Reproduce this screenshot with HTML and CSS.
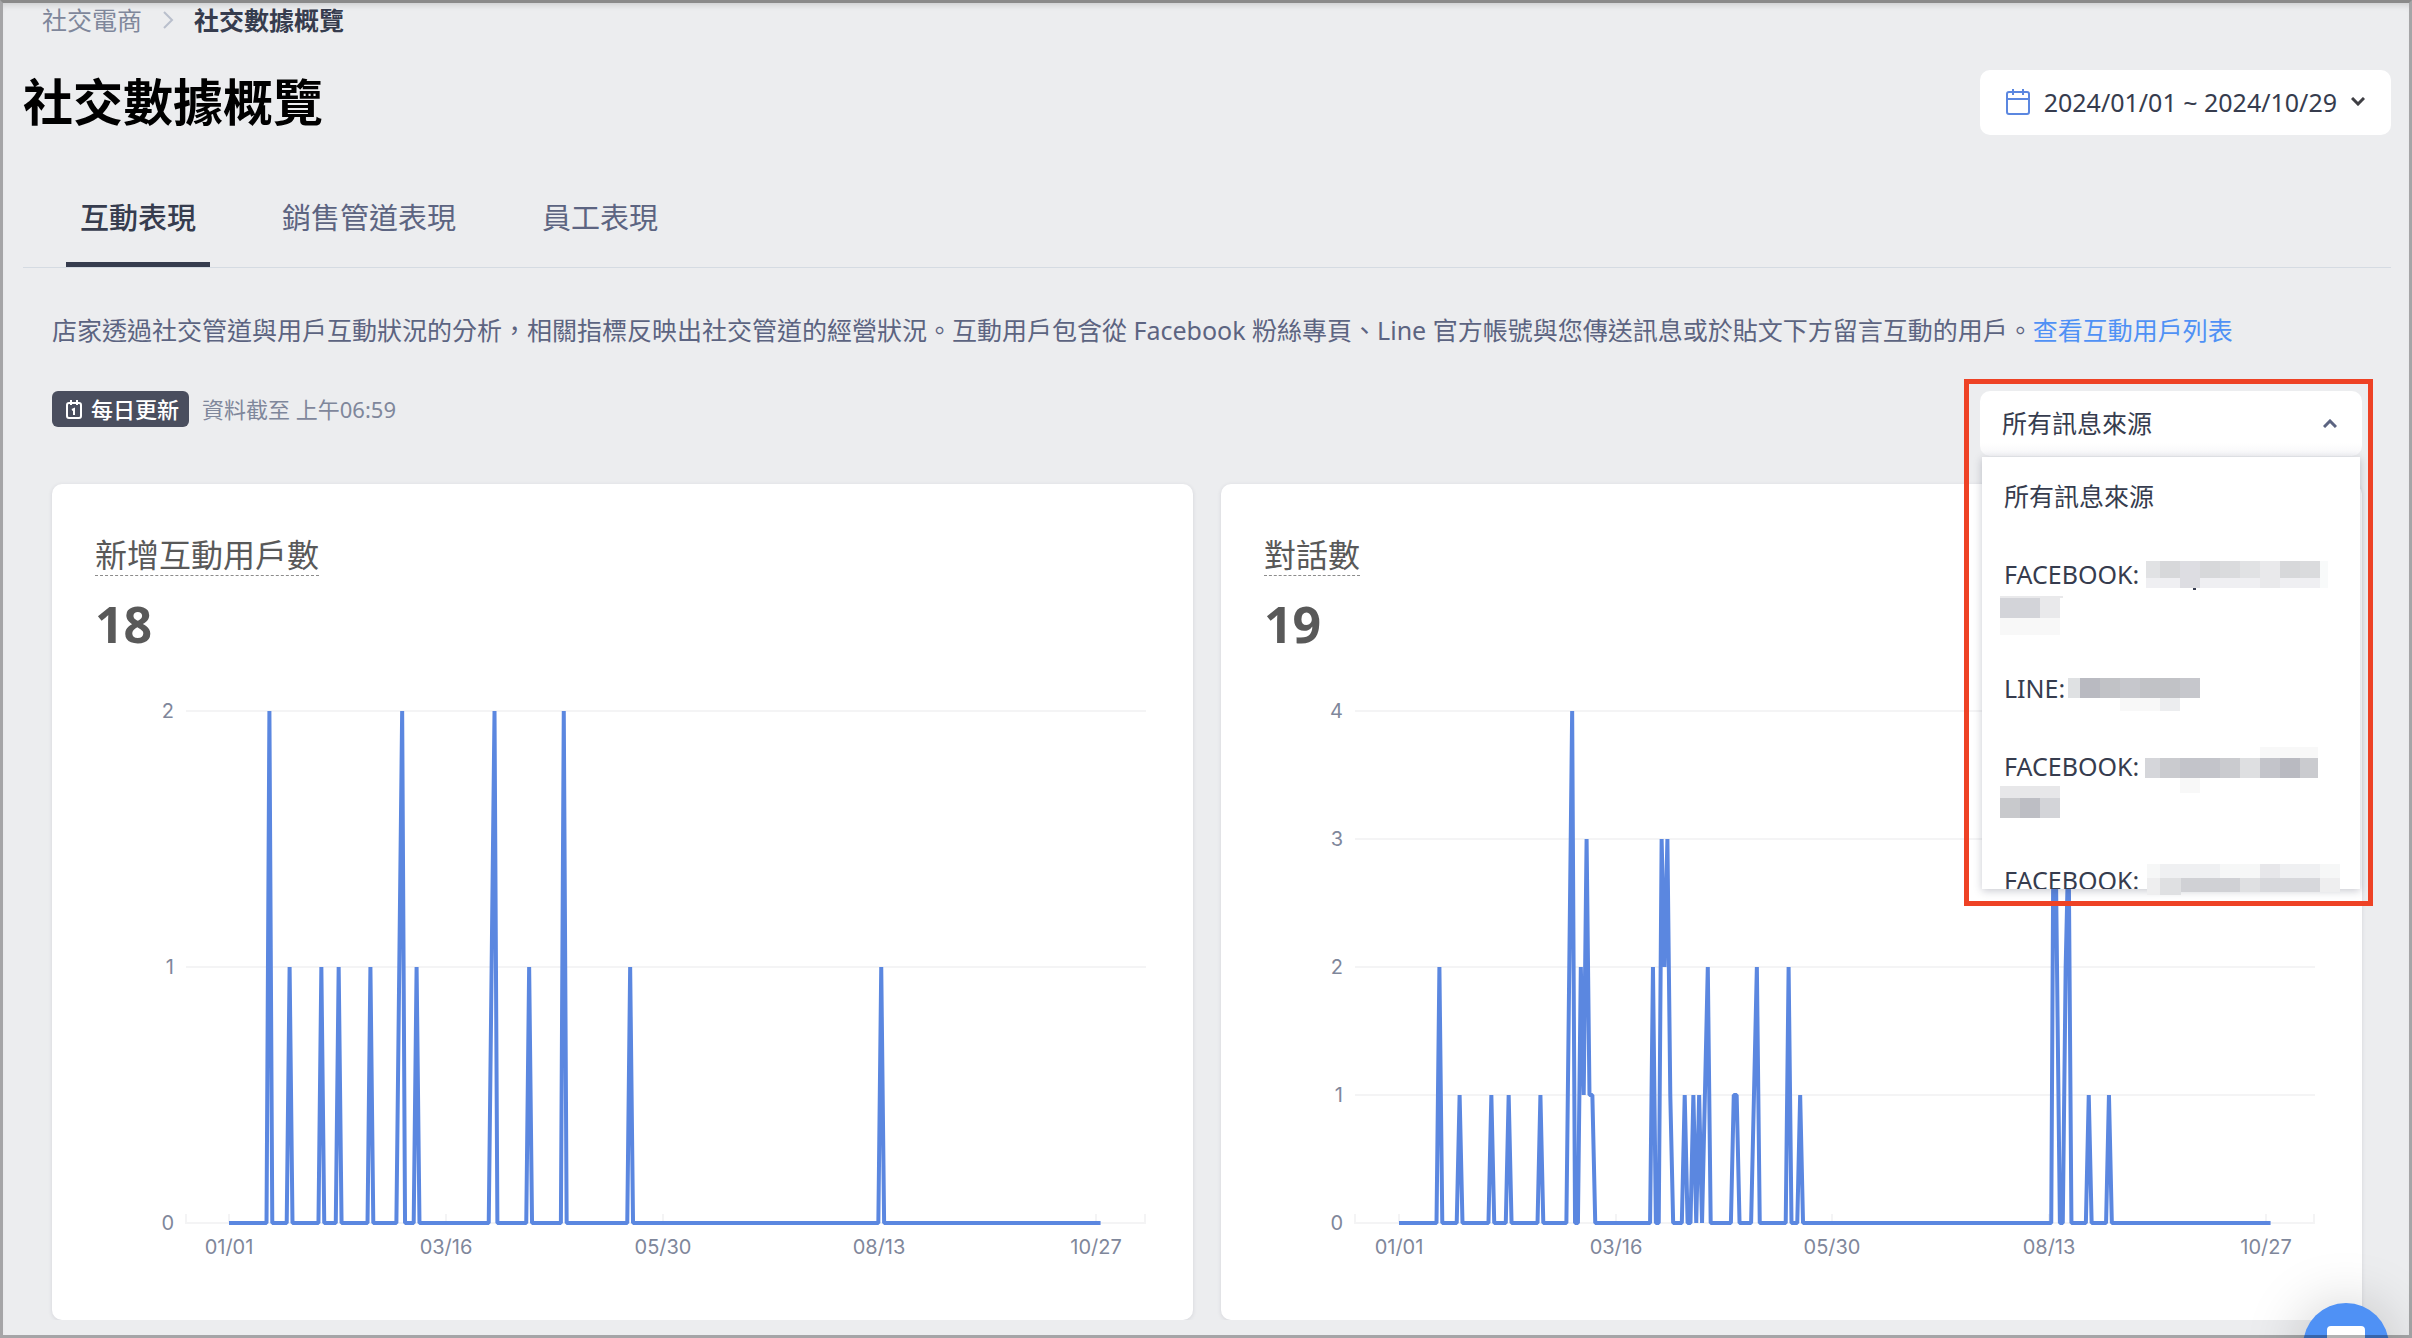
FILE: index.html
```html
<!DOCTYPE html>
<html lang="zh-Hant">
<head>
<meta charset="utf-8">
<meta name="viewport" content="width=device-width, initial-scale=1">
<title>社交數據概覽</title>
<link rel="stylesheet" href="styles.css">
</head>
<body>
<main class="page">
  <nav class="crumbs" aria-label="導覽">
    <a class="crumb-link" href="#">社交電商</a>
    <svg class="crumb-arrow" viewBox="0 0 12 20" aria-hidden="true"><path d="M2 2l8 8-8 8"/></svg>
    <span class="crumb-current">社交數據概覽</span>
  </nav>

  <header class="page-head">
    <h1 class="page-title">社交數據概覽</h1>
    <button class="date-picker" type="button">
      <svg class="date-icon" viewBox="0 0 24 26" aria-hidden="true"><rect x="1" y="3" width="22" height="22" rx="2"/><path d="M1 10h22M7 0v6M17 0v6"/></svg>
      <span>2024/01/01 ~ 2024/10/29</span>
      <svg class="date-caret" viewBox="0 0 14 9" aria-hidden="true"><path d="M1 1l6 6 6-6"/></svg>
    </button>
  </header>

  <div class="tabs" role="tablist">
    <button class="tab tab-active" type="button" role="tab" aria-selected="true">互動表現</button>
    <button class="tab" type="button" role="tab" aria-selected="false">銷售管道表現</button>
    <button class="tab" type="button" role="tab" aria-selected="false">員工表現</button>
  </div>

  <section class="content">
    <p class="intro">店家透過社交管道與用戶互動狀況的分析，相關指標反映出社交管道的經營狀況。互動用戶包含從 Facebook 粉絲專頁、Line 官方帳號與您傳送訊息或於貼文下方留言互動的用戶。<a class="intro-link" href="#">查看互動用戶列表</a></p>

    <div class="toolbar">
      <div class="update">
        <span class="badge">
          <svg class="badge-icon" viewBox="0 0 16 19" aria-hidden="true"><rect x="1" y="3" width="14" height="15" rx="2"/><path d="M5 0v5M11 0v5M6 10l2-1v6"/></svg>
          每日更新
        </span>
        <span class="update-time">資料截至 上午06:59</span>
      </div>

      <div class="source">
        <select class="source-select" aria-label="訊息來源">
          <option>所有訊息來源</option>
        </select>
        <svg class="source-caret" viewBox="0 0 14 9" aria-hidden="true"><path d="M1 8l6-6 6 6"/></svg>
        <ul class="source-menu" role="listbox" aria-label="訊息來源">
          <li class="source-item" role="option">所有訊息來源</li>
          <li class="source-item source-item-tall" role="option">FACEBOOK:</li>
          <li class="source-item" role="option">LINE:</li>
          <li class="source-item source-item-tall" role="option">FACEBOOK:</li>
          <li class="source-item source-item-tall" role="option">FACEBOOK:</li>
        </ul>
        <svg class="mosaic" viewBox="0 0 382 510" aria-hidden="true" shape-rendering="crispEdges">
          <!-- first Facebook page name -->
          <path fill="#e1e2e4" d="M166 170h14v17h-14zM260 170h20v17h-20z"/>
          <path fill="#d7d8da" d="M180 170h20v17h-20zM220 170h20v17h-20zM300 170h20v17h-20z"/>
          <path fill="#dddde2" d="M200 170h20v27h-20z"/>
          <path fill="#dadbdd" d="M240 170h20v17h-20zM320 170h20v17h-20z"/>
          <path fill="#e9e9eb" d="M280 170h20v17h-20zM280 187h20v10h-20z"/>
          <path fill="#efeff2" d="M166 187h34v10h-34zM220 187h60v10h-60zM300 187h40v10h-40z"/>
          <path fill="#f8fafa" d="M340 170h8v27h-8z"/>
          <path fill="#3a4052" d="M213 197h3v2h-3z"/>
          <path fill="#e9e9eb" d="M20 205h63v2h-63zM60 207h20v20h-20z"/>
          <path fill="#d3d4d9" d="M20 207h40v20h-40z"/>
          <path fill="#f8f8f8" d="M20 227h60v17h-60z"/>
          <!-- Line account name -->
          <path fill="#dfe1e3" d="M88 287h12v20h-12z"/>
          <path fill="#b9bac1" d="M100 287h20v20h-20z"/>
          <path fill="#c1c2c6" d="M120 287h20v20h-20zM160 287h40v20h-40z"/>
          <path fill="#c6c7cc" d="M140 287h20v20h-20zM200 287h20v20h-20z"/>
          <path fill="#f8f8f8" d="M140 307h40v13h-40z"/>
          <path fill="#ecedef" d="M180 307h20v13h-20z"/>
          <!-- second Facebook page name -->
          <path fill="#f8f8f8" d="M280 356h58v11h-58zM200 387h20v15h-20z"/>
          <path fill="#d5d6da" d="M165 367h15v20h-15z"/>
          <path fill="#cacbcf" d="M180 367h20v20h-20zM240 367h20v20h-20zM320 367h18v20h-18z"/>
          <path fill="#c3c4ca" d="M200 367h40v20h-40zM280 367h20v20h-20z"/>
          <path fill="#dedfe1" d="M260 367h20v20h-20z"/>
          <path fill="#b9bac1" d="M300 367h20v20h-20z"/>
          <path fill="#e7e7e9" d="M20 395h60v12h-60z"/>
          <path fill="#c8c9cc" d="M20 407h20v20h-20z"/>
          <path fill="#bdbec4" d="M40 407h20v20h-20z"/>
          <path fill="#d3d4d8" d="M60 407h20v20h-20z"/>
          <!-- third Facebook page name -->
          <path fill="#f6f7f7" d="M167 473h13v14h-13zM240 473h40v14h-40zM340 473h20v14h-20z"/>
          <path fill="#eff0f2" d="M180 473h60v14h-60zM300 473h40v14h-40z"/>
          <path fill="#e7e7ea" d="M280 473h20v14h-20z"/>
          <path fill="#eeeeef" d="M167 487h13v17h-13zM340 487h20v14h-20z"/>
          <path fill="#dfe0e2" d="M180 487h21v17h-21zM260 487h20v14h-20z"/>
          <path fill="#d0d1d5" d="M201 487h59v14h-59z"/>
          <path fill="#d7d8dc" d="M280 487h60v14h-60z"/>
        </svg>
        <div class="highlight" aria-hidden="true"></div>
      </div>
    </div>

    <div class="cards">
      <article class="card">
        <h2 class="card-title"><span class="card-term">新增互動用戶數</span></h2>
        <p class="card-value">18</p>
        <svg class="chart" viewBox="0 0 1141 640" role="img" aria-label="新增互動用戶數">
          <path class="grid" d="M134 31h960M134 287h960M134 543h960"/>
          <path class="grid" d="M134 534v10M177 534v10M394 534v10M611 534v10M827 534v10M1044 534v10M1093 534v10"/>
          <g class="axis-y"><text x="122" y="38">2</text><text x="122" y="294">1</text><text x="122" y="550">0</text></g>
          <g class="axis-x"><text x="177" y="574">01/01</text><text x="394" y="574">03/16</text><text x="611" y="574">05/30</text><text x="827" y="574">08/13</text><text x="1044" y="574">10/27</text></g>
          <!-- x is the day of the year, y the count -->
          <g transform="translate(177 543) scale(2.886 -256)">
            <polyline class="series" points="0,0 13,0 14,2 15,0 20,0 21,1 22,0 31,0 32,1 33,0 37,0 38,1 39,0 48,0 49,1 50,0 58,0 60,2 61,0 64,0 65,1 66,0 90,0 92,2 93,0 103,0 104,1 105,0 115,0 116,2 117,0 138,0 139,1 140,0 225,0 226,1 227,0 302,0"/>
          </g>
        </svg>
      </article>

      <article class="card">
        <h2 class="card-title"><span class="card-term">對話數</span></h2>
        <p class="card-value">19</p>
        <svg class="chart" viewBox="0 0 1141 640" role="img" aria-label="對話數">
          <path class="grid" d="M134 31h960M134 159h960M134 287h960M134 415h960M134 543h960"/>
          <path class="grid" d="M134 534v10M178 534v10M395 534v10M611 534v10M828 534v10M1045 534v10M1093 534v10"/>
          <g class="axis-y"><text x="122" y="38">4</text><text x="122" y="166">3</text><text x="122" y="294">2</text><text x="122" y="422">1</text><text x="122" y="550">0</text></g>
          <g class="axis-x"><text x="178" y="574">01/01</text><text x="395" y="574">03/16</text><text x="611" y="574">05/30</text><text x="828" y="574">08/13</text><text x="1045" y="574">10/27</text></g>
          <g transform="translate(178 543) scale(2.886 -128)">
            <polyline class="series" points="0,0 13,0 14,2 15,0 20,0 21,1 22,0 31,0 32,1 33,0 37,0 38,1 39,0 48,0 49,1 50,0 58,0 60,4 61,0 62,0 63,2 64,1 65,3 66,1 67,1 68,0 87,0 88,2 89,0 90,0 91,3 92,2 93,3 94,1 95,0 98,0 99,1 100,0 101,0 102,1 103,0 104,1 105,0 107,2 108,0 115,0 116,1 117,1 118,0 122,0 124,2 125,0 134,0 135,2 136,0 138,0 139,1 140,0 226,0 227,4 228,2 229,0 230,0 231,2 232,3 233,0 238,0 239,1 240,0 245,0 246,1 247,0 302,0"/>
          </g>
        </svg>
      </article>
    </div>
  </section>
</main>

<button class="chat" type="button" aria-label="線上客服">
  <svg class="chat-icon" viewBox="0 0 40 40" aria-hidden="true"><path d="M5 0h30a4 4 0 0 1 4 4v34l-9-7H5a4 4 0 0 1-4-4V4a4 4 0 0 1 4-4z"/></svg>
</button>
<div class="frame" aria-hidden="true"></div>
</body>
</html>
```
FILE: styles.css
```css
* {
  box-sizing: border-box;
}

body {
  margin: 0;
  background: #ecedef;
  color: #363c4e;
  font-family: "Noto Sans", "Noto Sans CJK TC", sans-serif;
  font-size: 25px;
  line-height: 36px;
}

h1, h2, p, ul {
  margin: 0;
  padding: 0;
}

button, select {
  border: 0;
  font: inherit;
  color: inherit;
  cursor: pointer;
}

a {
  text-decoration: none;
}

.page {
  padding: 3px 21px 0 23px;
}

.crumbs {
  display: flex;
  align-items: center;
  gap: 20px;
  height: 34px;
  padding-left: 19px;
}

.crumb-link {
  color: #7f879b;
}

.crumb-arrow {
  width: 12px;
  height: 20px;
  fill: none;
  stroke: #b9bfcc;
  stroke-width: 2;
}

.crumb-current {
  font-weight: 600;
}

.page-head {
  display: flex;
  align-items: center;
  justify-content: space-between;
  height: 65px;
  margin-top: 33px;
}

.page-title {
  color: #000;
  font-size: 50px;
  line-height: 65px;
  font-weight: 700;
}

.date-picker {
  display: flex;
  align-items: center;
  gap: 14px;
  height: 65px;
  padding: 0 26px 2px;
  border-radius: 10px;
  background: #fff;
}

.date-icon {
  width: 24px;
  height: 26px;
  fill: none;
  stroke: #5b87e0;
  stroke-width: 2;
}

.date-caret,
.source-caret {
  width: 14px;
  height: 9px;
  fill: none;
  stroke: #3f3f44;
  stroke-width: 3;
}

.tabs {
  display: flex;
  gap: 58px;
  margin-top: 33px;
  padding-left: 43px;
  border-bottom: 1px solid #d5dbe2;
}

.tab {
  padding: 31px 14px 25px;
  border-bottom: 5px solid transparent;
  background: none;
  color: #5c6481;
  font-size: 29px;
  line-height: 38px;
}

.tab-active {
  border-bottom-color: #363c4e;
  color: #363c4e;
  font-weight: 500;
}

.content {
  padding: 0 29px;
}

.intro {
  margin-top: 44px;
  color: #5c6481;
}

.intro-link {
  color: #4f91f5;
}

.toolbar {
  display: flex;
  align-items: flex-start;
  justify-content: space-between;
  margin-top: 43px;
}

.update {
  display: flex;
  align-items: center;
  gap: 13px;
  font-size: 22px;
}

.badge {
  display: flex;
  align-items: center;
  gap: 9px;
  height: 36px;
  padding: 0 10px 0 14px;
  border-radius: 6px;
  background: #4a4e5e;
  color: #fff;
  font-weight: 500;
}

.badge-icon {
  width: 16px;
  height: 19px;
  fill: none;
  stroke: #fff;
  stroke-width: 2;
}

.update-time {
  color: #7f879b;
}

.source {
  position: relative;
  z-index: 1;
  width: 382px;
}

.source-select {
  display: block;
  width: 100%;
  height: 65px;
  padding: 0 22px 2px;
  border-radius: 10px;
  background: #fff linear-gradient(#fff 80%, #f6f6f8);
  appearance: none;
}

.source-caret {
  position: absolute;
  top: 28px;
  right: 25px;
  stroke: #5c6481;
}

.source-menu {
  position: absolute;
  top: 66px;
  left: 2px;
  right: 2px;
  height: 432px;
  overflow: hidden;
  background: #fff;
  box-shadow: 0 2px 8px rgba(40, 44, 70, 0.25);
  list-style: none;
}

.source-item {
  padding: 22px 22px 21px;
  line-height: 35px;
}

.source-item-tall {
  height: 114px;
}

.mosaic {
  position: absolute;
  top: 0;
  left: 0;
  width: 382px;
  height: 510px;
}

.highlight {
  position: absolute;
  top: -12px;
  left: -16px;
  right: -11px;
  height: 527px;
  border: 5px solid #ee4225;
}

.cards {
  display: grid;
  grid-template-columns: 1fr 1fr;
  gap: 28px;
  margin-top: 28px;
}

.card {
  padding-top: 50px;
  border-radius: 10px;
  background: #fff;
  box-shadow: 0 1px 4px rgba(40, 44, 70, 0.12);
}

.card-title {
  display: flex;
  padding: 0 43px;
  color: #595959;
  font-size: 32px;
  font-weight: 400;
  line-height: 41px;
}

.card-term {
  border-bottom: 1px dashed #8c8c8c;
}

.card-value {
  margin-top: 18px;
  padding: 0 43px;
  color: #595959;
  font-size: 50px;
  font-weight: 700;
  line-height: 60px;
}

.chart {
  display: block;
  width: 100%;
  margin-top: 26px;
  fill: #7f879b;
  font-family: Inter, sans-serif;
  font-size: 20px;
}

.grid {
  fill: none;
  stroke: #f4f4f5;
  stroke-width: 2;
}

.axis-x {
  text-anchor: middle;
}

.axis-y {
  text-anchor: end;
}

.series {
  fill: none;
  stroke: #5b87e0;
  stroke-width: 4;
  stroke-linejoin: bevel;
  vector-effect: non-scaling-stroke;
}

.chat {
  position: fixed;
  z-index: 2;
  right: 23px;
  bottom: -51px;
  width: 86px;
  height: 86px;
  padding: 21px 23px;
  border-radius: 50%;
  background: #4f91f5;
  box-shadow: 0 4px 60px rgba(0, 0, 0, 0.22);
}

.chat-icon {
  display: block;
  width: 40px;
  height: 40px;
  fill: #fff;
}

.frame {
  position: fixed;
  z-index: 3;
  inset: 0;
  border: 3px solid rgba(0, 0, 0, 0.3);
  border-top-color: #8a8a8a;
  box-shadow: inset 0 6px 6px -4px rgba(0, 0, 0, 0.14);
  pointer-events: none;
}
```
